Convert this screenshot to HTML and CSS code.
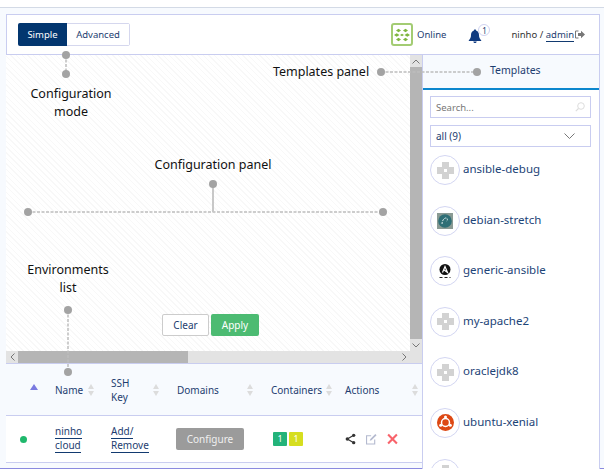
FILE: index.html
```html
<!DOCTYPE html>
<html lang="en">
<head>
    <meta charset="UTF-8">
    <meta name="viewport" content="width=device-width, initial-scale=1.0">
    <title>Environments</title>
    <link rel="stylesheet" href="styles.css">
</head>
<body>
    <div class="app">
        <header class="topbar">
            <div class="mode-toggle">
                <button class="mode-btn active" type="button">Simple</button>
                <button class="mode-btn" type="button">Advanced</button>
            </div>
            <div class="status">
                <span class="status-logo">
                    <svg width="16" height="14" viewBox="0 0 16 14">
                        <g fill="#7fb63f">
                            <path d="M2 2.500L4.500.8 7 2.500 4.500 4.200zM9 2.500L11.500.8 14 2.500 11.500 4.200z"/>
                            <path d="M0 7l2.700-1.700L5.500 7 2.700 8.700zM10.500 7l2.800-1.700L16 7l-2.700 1.700z"/>
                            <path d="M2 11.500l2.500-1.700L7 11.500l-2.500 1.700zM9 11.500l2.500-1.700 2.500 1.700-2.500 1.700z"/>
                            <path d="M6 7l2-1.200L10 7 8 8.200z"/>
                        </g>
                    </svg>
                </span>
                <span>Online</span>
            </div>
            <div class="bell">
                <svg width="14" height="14" viewBox="0 0 14 14">
                    <path fill="#0f3a80" d="M7 0.5c.8 0 1.200.5 1.300 1.200C10 2.300 11 3.800 11 6c0 2.500.8 3.900 2.200 5.200v.8H.8v-.8C2.200 9.900 3 8.500 3 6c0-2.200 1-3.700 2.700-4.300C5.800 1 6.200.5 7 .5zM5.300 12.500h3.400C8.500 13.500 7.800 14 7 14s-1.500-.5-1.700-1.500z"/>
                </svg>
                <span class="bell-count">1</span>
            </div>
            <div class="user">
                <span>ninho / </span><a href="#" class="link">admin</a>
                <svg width="10" height="9" viewBox="0 0 10 9">
                    <path fill="none" stroke="#777" d="M3.500 1H.5v7h3"/>
                    <path fill="#777" d="M3 3h3V.8L10 4.500 6 8.200V6H3z"/>
                </svg>
            </div>
        </header>

        <div class="body">
            <main class="left">
                <div class="canvas-wrap">
                    <div class="canvas">
                        <div class="canvas-actions">
                            <button class="btn-clear" type="button">Clear</button>
                            <button class="btn-apply" type="button">Apply</button>
                        </div>
                    </div>
                    <div class="vscroll">
                        <span class="arrow">
                            <svg width="8" height="5" viewBox="0 0 8 5"><path fill="none" stroke="#777" d="M.5 4.500L4 1l3.500 3.500"/></svg>
                        </span>
                        <span class="vthumb"></span>
                        <span class="arrow">
                            <svg width="8" height="5" viewBox="0 0 8 5"><path fill="none" stroke="#777" d="M.5.500L4 4l3.500-3.500"/></svg>
                        </span>
                    </div>
                    <div class="hscroll">
                        <span class="arrow">
                            <svg width="5" height="8" viewBox="0 0 5 8"><path fill="none" stroke="#777" d="M4.500.5L1 4l3.500 3.500"/></svg>
                        </span>
                        <span class="hthumb"></span>
                        <span class="arrow">
                            <svg width="5" height="8" viewBox="0 0 5 8"><path fill="none" stroke="#777" d="M.5.5L4 4 .5 7.500"/></svg>
                        </span>
                    </div>
                    <span class="scroll-corner"></span>
                </div>

                <div class="env-head env-grid">
                    <div class="cell-sort"><span class="sort-up"></span></div>
                    <div class="cell name-col">Name<span class="sort"></span></div>
                    <div class="cell ssh-col"><span class="two-line">SSH<br>Key</span><span class="sort"></span></div>
                    <div class="cell domains-col">Domains<span class="sort"></span></div>
                    <div class="cell containers-col">Containers<span class="sort"></span></div>
                    <div class="cell actions-col">Actions<span class="sort"></span></div>
                </div>
                <div class="env-row env-grid">
                    <div class="cell-sort"><span class="dot"></span></div>
                    <div class="cell"><a href="#" class="link-lines"><span>ninho</span><span>cloud</span></a></div>
                    <div class="cell"><a href="#" class="link-lines"><span>Add/</span><span>Remove</span></a></div>
                    <div class="cell"><button class="btn-configure" type="button">Configure</button></div>
                    <div class="cell counts">
                        <span class="count green">1</span>
                        <span class="count yellow">1</span>
                    </div>
                    <div class="cell row-actions">
                        <svg width="11" height="12" viewBox="0 0 12 12">
                            <path fill="none" stroke="#333" stroke-width="1.300" d="M9.500 2L2.500 6l7 4"/>
                            <circle cx="9.500" cy="2" r="1.800" fill="#333"/>
                            <circle cx="2.500" cy="6" r="1.800" fill="#333"/>
                            <circle cx="9.500" cy="10" r="1.800" fill="#333"/>
                        </svg>
                        <svg width="11" height="12" viewBox="0 0 12 12">
                            <path fill="none" stroke="#b4bacf" stroke-width="1.200" d="M9.500 6.500v4.900H.6V2.500h5"/>
                            <path fill="#b4bacf" d="M10.200.5l1.300 1.300-5.500 5.500-2 .7.700-2z"/>
                        </svg>
                        <svg width="11" height="12" viewBox="0 0 12 12">
                            <path fill="none" stroke="#f8636b" stroke-width="2.300" d="M1.200 1.200l9.600 9.600M10.800 1.200l-9.600 9.600"/>
                        </svg>
                    </div>
                </div>
            </main>

            <aside class="templates">
                <div class="templates-tab">Templates</div>
                <div class="search">
                    <span>Search...</span>
                    <svg width="10" height="10" viewBox="0 0 10 10">
                        <circle cx="6" cy="4" r="3.300" fill="none" stroke="#ddd"/>
                        <path stroke="#ddd" stroke-width="1.200" d="M3.500 6.500L.8 9.200"/>
                    </svg>
                </div>
                <div class="select">
                    <span>all (9)</span>
                    <svg width="11" height="6" viewBox="0 0 11 6"><path fill="none" stroke="#777" d="M.5.500l5 5 5-5"/></svg>
                </div>
                <ul class="template-list">
                    <li>
                        <span class="tpl-icon"><span class="tiles"></span></span>
                        <span class="tpl-name">ansible-debug</span>
                    </li>
                    <li>
                        <span class="tpl-icon">
                            <svg width="16" height="16" viewBox="0 0 16 16">
                                <rect width="16" height="16" fill="#8a9a94"/>
                                <circle cx="8" cy="8" r="6.800" fill="#2f6f76"/>
                                <path fill="none" stroke="#dfeeee" stroke-dasharray="2 1" d="M5 11c0-3 1.500-5.500 3.500-6 2-.4 2.500 2 1 3.500"/>
                            </svg>
                        </span>
                        <span class="tpl-name">debian-stretch</span>
                    </li>
                    <li>
                        <span class="tpl-icon">
                            <svg width="16" height="16" viewBox="0 0 16 16">
                                <circle cx="8" cy="6.500" r="5.500" fill="#111"/>
                                <path fill="none" stroke="#fff" stroke-width="1.200" d="M5.500 9.500L8 3.500l2.500 6-4-3"/>
                                <path stroke="#222" stroke-dasharray="3 2" d="M2.500 14.500h11"/>
                            </svg>
                        </span>
                        <span class="tpl-name">generic-ansible</span>
                    </li>
                    <li>
                        <span class="tpl-icon"><span class="tiles"></span></span>
                        <span class="tpl-name">my-apache2</span>
                    </li>
                    <li>
                        <span class="tpl-icon"><span class="tiles"></span></span>
                        <span class="tpl-name">oraclejdk8</span>
                    </li>
                    <li>
                        <span class="tpl-icon">
                            <svg width="17" height="17" viewBox="0 0 17 17">
                                <circle cx="8.500" cy="8.500" r="8.500" fill="#dd4814"/>
                                <circle cx="8.500" cy="8.500" r="4" fill="none" stroke="#fff" stroke-width="1.500"/>
                                <circle cx="8.500" cy="3" r="1.500" fill="#fff"/>
                                <circle cx="3.700" cy="11.300" r="1.500" fill="#fff"/>
                                <circle cx="13.300" cy="11.300" r="1.500" fill="#fff"/>
                            </svg>
                        </span>
                        <span class="tpl-name">ubuntu-xenial</span>
                    </li>
                    <li>
                        <span class="tpl-icon"><span class="tiles"></span></span>
                    </li>
                </ul>
            </aside>
        </div>
    </div>

    <!-- help overlay -->
    <svg class="help-lines" width="604" height="475" viewBox="0 0 604 475">
        <g fill="none" stroke="#bdbdbd" stroke-width="1.500" stroke-dasharray="3 1.500">
            <path d="M66 55v19"/>
            <path d="M381 72h96"/>
            <path d="M28 212h355"/>
            <path d="M68 310v63"/>
        </g>
        <path fill="none" stroke="#c8c8c8" stroke-width="2" d="M213 184v28"/>
        <g fill="#a3a3a3">
            <circle cx="66" cy="55" r="4"/>
            <circle cx="66" cy="74" r="4"/>
            <circle cx="381" cy="72" r="4"/>
            <circle cx="477" cy="72" r="4"/>
            <circle cx="213" cy="184" r="4"/>
            <circle cx="28" cy="212" r="4"/>
            <circle cx="383" cy="212" r="4"/>
            <circle cx="68" cy="310" r="4"/>
            <circle cx="68" cy="372" r="4"/>
        </g>
    </svg>
    <div class="help-label label-mode">Configuration<br>mode</div>
    <div class="help-label label-templates">Templates panel</div>
    <div class="help-label label-config">Configuration panel</div>
    <div class="help-label label-envs">Environments<br>list</div>
</body>
</html>
```

FILE: styles.css
```css
* {
    box-sizing: border-box;
}
html, body {
    height: 100%;
}
body {
    margin: 0;
    padding-top: 7px;
    position: relative;
    overflow: hidden;
    font-family: "Noto Sans", sans-serif;
    font-size: 10px;
    color: #1d3d70;
    background: white;
}
.app {
    height: 462px;
    padding: 6px 4px 0 6px;
    background: #f7fafe;
    border-top: 1px solid #d3dae6;
    border-bottom: 1px solid #8a8adf;
}
a.link {
    color: #1d3d70;
    text-decoration: none;
    border-bottom: 1px solid #123a70;
}
.link-lines {
    color: #1d3d70;
    text-decoration: none;
}
.link-lines span {
    display: block;
    width: fit-content;
    line-height: 13px;
    border-bottom: 1px solid #123a70;
}
.topbar {
    display: flex;
    align-items: center;
    height: 41px;
    padding: 0 11px;
    background: white;
    border: 1px solid #c9cdf0;
}
.topbar > * {
    flex: none;
}
.mode-toggle {
    display: flex;
    width: 112px;
    height: 23px;
    border: 1px solid #d5d7ee;
    border-radius: 2px;
}
.mode-btn {
    font: inherit;
    font-size: 9.5px;
    padding: 0;
    flex: 1;
    background: white;
    color: #1d3d70;
    border: none;
}
.mode-btn.active {
    flex: 0 0 49px;
    margin: -1px 0 -1px -1px;
    background: #03366f;
    color: white;
    border-radius: 2px 0 0 2px;
}
.status {
    display: flex;
    align-items: center;
    gap: 4px;
    margin-left: 261px;
    font-size: 9.5px;
}
.status-logo {
    display: flex;
    align-items: center;
    justify-content: center;
    width: 22px;
    height: 23px;
    border: 2px solid #a3cc73;
    border-radius: 3px;
}
.bell {
    position: relative;
    margin-left: 22px;
    display: flex;
    padding-top: 3px;
}
.bell-count {
    position: absolute;
    left: 10px;
    top: -2px;
    width: 12px;
    height: 12px;
    line-height: 11px;
    text-align: center;
    font-size: 8px;
    background: white;
    border: 1px solid #cfd2f0;
    border-radius: 50%;
}
.user {
    display: flex;
    align-items: center;
    margin-left: 29px;
    font-size: 9.5px;
    color: #333;
    white-space: pre;
}
.user svg {
    margin-left: 1px;
}
.body {
    display: flex;
    height: 414px;
}
.left {
    width: 417px;
    border-right: 1px solid #c9cdf0;
}
.canvas-wrap {
    display: grid;
    grid-template-columns: 404px 12px;
    grid-template-rows: 296px 12px;
    border-bottom: 1px solid #c9cdf0;
}
.canvas {
    display: flex;
    align-items: flex-end;
    justify-content: center;
    padding: 0 0 15px 5px;
    background: repeating-linear-gradient(45deg, #f8f8f8 0, #f8f8f8 1px, white 1px, white 4px);
}
.canvas-actions {
    display: flex;
    gap: 2px;
}
.btn-clear, .btn-apply {
    width: 48px;
    height: 22px;
    font: inherit;
    font-size: 10px;
    border-radius: 2px;
}
.btn-clear {
    width: 47px;
    background: white;
    color: #1d3d70;
    border: 1px solid #ccc;
}
.btn-apply {
    background: #4cbb72;
    color: white;
    border: none;
}
.vscroll {
    display: flex;
    flex-direction: column;
    background: #e3e3e3;
}
.hscroll {
    display: flex;
    background: #e3e3e3;
}
.arrow {
    flex: 0 0 12px;
    display: flex;
    align-items: center;
    justify-content: center;
}
.vthumb {
    flex: 1;
    background: #b5b5b5;
}
.hthumb {
    flex: 0 0 170px;
    background: #b5b5b5;
    margin-right: auto;
}
.scroll-corner {
    background: #e3e3e3;
}
.env-grid {
    display: grid;
    grid-template-columns: 49px 56px 66px 94px 74px 77px;
    align-items: center;
    background: white;
}
.env-head {
    height: 52px;
    background: #f7fafe;
    border-bottom: 1px solid #c9cdf0;
}
.env-row {
    height: 47px;
    border-bottom: 1px solid #c9cdf0;
}
.cell {
    display: flex;
    align-items: center;
    line-height: 12px;
}
.cell-sort {
    display: flex;
    justify-content: flex-end;
    align-items: center;
}
.two-line {
    line-height: 14px;
}
.sort-up {
    margin: -5px 17px 0 0;
    border-left: 4px solid transparent;
    border-right: 4px solid transparent;
    border-bottom: 6px solid #7a7ae0;
}
.dot {
    width: 7px;
    height: 7px;
    margin-right: 28px;
    background: #1fb86c;
    border-radius: 50%;
}
.sort {
    position: relative;
    width: 6px;
    height: 10px;
    margin-left: auto;
}
.sort::before, .sort::after {
    content: "";
    position: absolute;
    left: 0;
    border: 3px solid transparent;
}
.sort::before {
    top: -1px;
    border-top: 0;
    border-bottom: 5px solid #dcdcdc;
}
.sort::after {
    top: 6px;
    border-bottom: 0;
    border-top: 5px solid #dcdcdc;
}
.name-col {
    padding-right: 17px;
}
.ssh-col, .domains-col {
    padding-right: 18px;
}
.containers-col {
    padding-right: 13px;
}
.actions-col {
    padding-right: 4px;
}
.btn-configure {
    width: 68px;
    height: 22px;
    margin-left: -1px;
    font: inherit;
    font-size: 10px;
    color: #f0f0f0;
    background: #9b9b9b;
    border: none;
    border-radius: 2px;
}
.counts {
    gap: 2px;
    padding-left: 2px;
}
.count {
    width: 14px;
    height: 14px;
    line-height: 14px;
    text-align: center;
    font-size: 9px;
    color: white;
    border-radius: 1px;
}
.green {
    background: #23b37a;
}
.yellow {
    background: #d6de1f;
}
.row-actions {
    gap: 10px;
}
.templates {
    flex: 1;
    background: white;
    border-right: 1px solid #c9cdf0;
}
.templates-tab {
    height: 35px;
    padding: 0 0 3px 67px;
    display: flex;
    align-items: center;
    background: #f7fafe;
    border-bottom: 2px solid #0c86cd;
    font-size: 10.5px;
}
.search, .select {
    display: flex;
    align-items: center;
    justify-content: space-between;
    width: 161px;
    height: 22px;
    margin: 6px 0 0 7px;
    padding: 0 5px;
    background: white;
    border: 1px solid #c9cdf0;
    font-size: 10px;
}
.search {
    font-size: 9.5px;
    color: #777;
}
.select {
    margin-top: 7px;
    padding-right: 15px;
    color: #1d3d70;
}
.template-list {
    list-style: none;
    display: flex;
    flex-direction: column;
    gap: 20.6px;
    margin: 8px 0 0;
    padding: 0 0 0 7px;
    height: 313px;
    overflow: hidden;
}
.template-list li {
    flex: none;
    display: flex;
    align-items: center;
    gap: 3px;
    height: 30px;
    font-size: 11.5px;
    color: #1d4477;
}
.tpl-name {
    margin-top: -3px;
}
.tpl-icon {
    flex: none;
    display: flex;
    align-items: center;
    justify-content: center;
    width: 30px;
    height: 30px;
    background: white;
    border: 1px solid #d3d6f2;
    border-radius: 50%;
}
.tiles {
    width: 17px;
    height: 17px;
    background:
        linear-gradient(#d2d2d2, #d2d2d2) 5px 0 / 7px 7px no-repeat,
        linear-gradient(#d2d2d2, #d2d2d2) 0 5px / 7px 7px no-repeat,
        linear-gradient(#d2d2d2, #d2d2d2) 10px 5px / 7px 7px no-repeat,
        linear-gradient(#d2d2d2, #d2d2d2) 5px 10px / 7px 7px no-repeat;
}
.help-lines {
    position: absolute;
    left: 0;
    top: 0;
    pointer-events: none;
}
.help-label {
    position: absolute;
    text-align: center;
    font-size: 12.5px;
    line-height: 18px;
    color: #111;
}
.label-mode {
    left: 21px;
    top: 85px;
    width: 100px;
}
.label-templates {
    left: 263px;
    top: 63px;
    width: 116px;
}
.label-config {
    left: 143px;
    top: 156px;
    width: 140px;
}
.label-envs {
    left: 18px;
    top: 261px;
    width: 100px;
}
```
